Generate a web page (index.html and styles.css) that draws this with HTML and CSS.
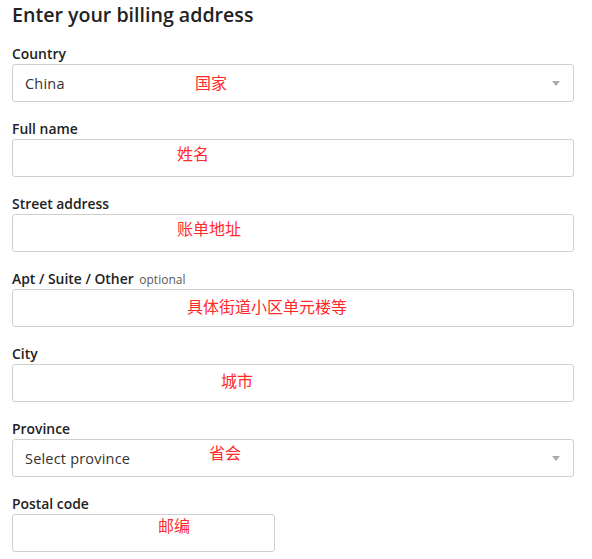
FILE: index.html
```html
<!DOCTYPE html>
<html>
<head>
<meta charset="utf-8">
<link rel="stylesheet" href="styles.css">
</head>
<body>
<h1 class="title">Enter your billing address</h1>
<div class="field">
  <label class="label">Country</label>
  <div class="box select"><span class="value">China</span><span class="arrow"></span><span class="note n-country">国家</span></div>
</div>
<div class="field">
  <label class="label">Full name</label>
  <div class="box"><span class="note n-name">姓名</span></div>
</div>
<div class="field">
  <label class="label">Street address</label>
  <div class="box"><span class="note n-street">账单地址</span></div>
</div>
<div class="field">
  <label class="label">Apt / Suite / Other <span class="optional">optional</span></label>
  <div class="box"><span class="note n-apt">具体街道小区单元楼等</span></div>
</div>
<div class="field">
  <label class="label">City</label>
  <div class="box"><span class="note n-city">城市</span></div>
</div>
<div class="field">
  <label class="label">Province</label>
  <div class="box select"><span class="value">Select province</span><span class="arrow"></span><span class="note n-prov">省会</span></div>
</div>
<div class="field">
  <label class="label">Postal code</label>
  <div class="box short"><span class="note n-postal">邮编</span></div>
</div>
</body>
</html>
```
FILE: styles.css
```css
html, body { margin: 0; padding: 0; background: #fff; }
body {
  padding: 0 18px 0 12px;
  font-family: "Open Sans", "Noto Sans", sans-serif;
  color: #222;
}
.title {
  margin: 0 0 14px;
  font-size: 19.6px;
  line-height: 30px;
  font-weight: 600;
  color: #222;
}
.field { margin-bottom: 17px; }
.label {
  display: block;
  height: 20px;
  line-height: 20px;
  font-size: 13.9px;
  font-weight: 600;
  color: #222;
}
.optional {
  font-weight: 400;
  font-size: 12px;
  color: #595959;
  margin-left: 2px;
}
.box {
  position: relative;
  box-sizing: border-box;
  height: 38px;
  border: 1px solid #cfcfcf;
  border-radius: 3px;
  display: flex;
  align-items: center;
  padding-left: 12px;
}
.box.short { width: 263px; }
.value { font-size: 14.5px; letter-spacing: 0.2px; color: #333; }
.arrow {
  position: absolute;
  right: 13px;
  top: 16px;
  width: 0; height: 0;
  border-left: 4px solid transparent;
  border-right: 4px solid transparent;
  border-top: 5px solid #aaa;
}
.note {
  position: absolute;
  font-family: "Noto Sans CJK SC", sans-serif;
  font-size: 16px;
  line-height: 18px;
  color: #ff2a2a;
  white-space: nowrap;
}
.n-country { left: 182px; top: 8px; }
.n-name { left: 164px; top: 4px; }
.n-street { left: 164px; top: 4px; }
.n-apt { left: 174px; top: 7px; }
.n-city { left: 208px; top: 6px; }
.n-prov { left: 196px; top: 3px; }
.n-postal { left: 145px; top: 1px; }
```
